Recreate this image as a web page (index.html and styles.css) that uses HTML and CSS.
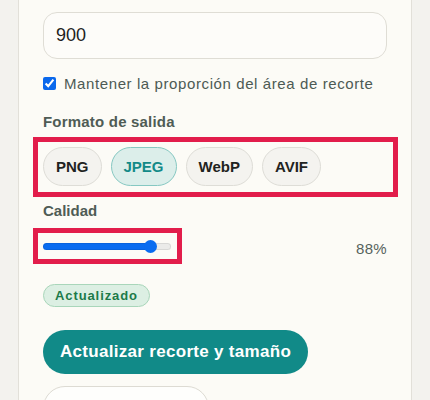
FILE: index.html
```html
<!DOCTYPE html>
<html lang="es">
<head>
<meta charset="utf-8">
<title>Recorte y tamaño</title>
<link rel="stylesheet" href="styles.css">
</head>
<body>
<div class="page">
  <section class="card">
    <input class="text-input" type="text" value="900" aria-label="Alto">
    <label class="check-row">
      <input class="check" type="checkbox" checked>
      <span>Mantener la proporción del área de recorte</span>
    </label>

    <div class="field-label label-format">Formato de salida</div>
    <div class="pills highlight">
      <button class="pill">PNG</button>
      <button class="pill is-active">JPEG</button>
      <button class="pill">WebP</button>
      <button class="pill">AVIF</button>
    </div>

    <div class="field-label label-quality">Calidad</div>
    <div class="quality-row">
      <div class="slider-wrap highlight">
        <input class="range" type="range" min="0" max="100" value="88" aria-label="Calidad">
      </div>
      <span class="quality-value">88%</span>
    </div>

    <div class="status-row">
      <span class="badge">Actualizado</span>
    </div>

    <button class="primary-btn">Actualizar recorte y tamaño</button>
    <button class="secondary-btn" aria-label="Restablecer"></button>
  </section>
</div>
</body>
</html>
```

FILE: styles.css
```css
* { box-sizing: border-box; }

html, body {
  margin: 0;
  padding: 0;
  background: #f3f2ee;
  font-family: "Liberation Sans", Arial, sans-serif;
  overflow: hidden;
}

.page {
  padding: 0 18px;
  height: 400px;
}

.card {
  background: #fcfbf6;
  border-left: 1px solid #e2e0d9;
  border-right: 1px solid #e2e0d9;
  padding: 12px 24px 40px;
  display: flex;
  flex-direction: column;
  align-items: flex-start;
  min-height: 460px;
}

.text-input {
  width: 100%;
  height: 47px;
  border: 1px solid #dfddd5;
  border-radius: 14px;
  background: #fdfcf9;
  padding: 0 12px;
  font-family: inherit;
  font-size: 18px;
  color: #1e1f1e;
  outline: none;
}

.check-row {
  margin-top: 14px;
  display: flex;
  align-items: center;
  gap: 8px;
  height: 20px;
  font-size: 15px;
  letter-spacing: 0.6px;
  color: #4d5a54;
}

.check {
  margin: 0;
  width: 13px;
  height: 13px;
  accent-color: #0a68ec;
}

.field-label {
  font-size: 15px;
  font-weight: 700;
  color: #4f5c55;
  line-height: 20px;
  letter-spacing: 0.2px;
}

.label-format { margin-top: 19px; }
.label-quality { margin-top: 15px; letter-spacing: 0; }

.highlight { position: relative; }
.highlight::after {
  content: "";
  position: absolute;
  border: 5.5px solid #e21d4b;
  pointer-events: none;
}

.pills {
  margin-top: 15px;
  display: flex;
  gap: 9px;
  width: 100%;
}
.pills::after { top: -10px; left: -10px; right: -11px; bottom: -11px; }

.pill {
  height: 39px;
  padding: 0 12px;
  border: 1px solid #deddd7;
  border-radius: 20px;
  background: #f4f3ef;
  font-family: inherit;
  font-size: 15px;
  font-weight: 700;
  color: #1f2321;
}

.pill.is-active {
  background: #dceeea;
  border-color: #86c8c2;
  color: #138a88;
}

.quality-row {
  margin-top: 17px;
  width: 100%;
  display: flex;
  justify-content: space-between;
  align-items: center;
  height: 16px;
}

.slider-wrap { width: 128px; height: 16px; display: flex; }
.slider-wrap::after { top: -10px; left: -10.5px; right: -10.5px; bottom: -10px; }

.range {
  -webkit-appearance: none;
  appearance: none;
  margin: 0;
  width: 128px;
  height: 16px;
  background: transparent;
}
.range::-webkit-slider-runnable-track {
  height: 7px;
  border-radius: 4px;
  background: linear-gradient(to right, #0a6cf0 0 84%, #ebebe9 84% 100%);
  box-shadow: inset 0 0 0 1px rgba(0,0,0,0.08);
}
.range::-webkit-slider-thumb {
  -webkit-appearance: none;
  width: 13px;
  height: 13px;
  margin-top: -3px;
  border-radius: 50%;
  background: #0a6cf0;
  border: none;
}

.quality-value {
  font-size: 15px;
  color: #56635c;
  letter-spacing: 0.3px;
  margin-top: 4px;
}

.status-row { margin-top: 30px; display: flex; }

.badge {
  height: 23px;
  display: inline-flex;
  align-items: center;
  padding: 0 11px;
  border: 1px solid #a9d6ba;
  border-radius: 12px;
  background: #dcefe3;
  color: #1d7a49;
  font-size: 13px;
  font-weight: 700;
  letter-spacing: 0.9px;
}

.primary-btn {
  margin-top: 23px;
  height: 44px;
  padding: 0 17px;
  border: none;
  border-radius: 22px;
  background: #118a88;
  color: #ffffff;
  font-family: inherit;
  font-size: 17px;
  font-weight: 700;
  letter-spacing: 0.3px;
}

.secondary-btn {
  margin-top: 12px;
  width: 166px;
  height: 44px;
  border: 1px solid #dddbd3;
  border-radius: 22px;
  background: #fefefc;
}
```
